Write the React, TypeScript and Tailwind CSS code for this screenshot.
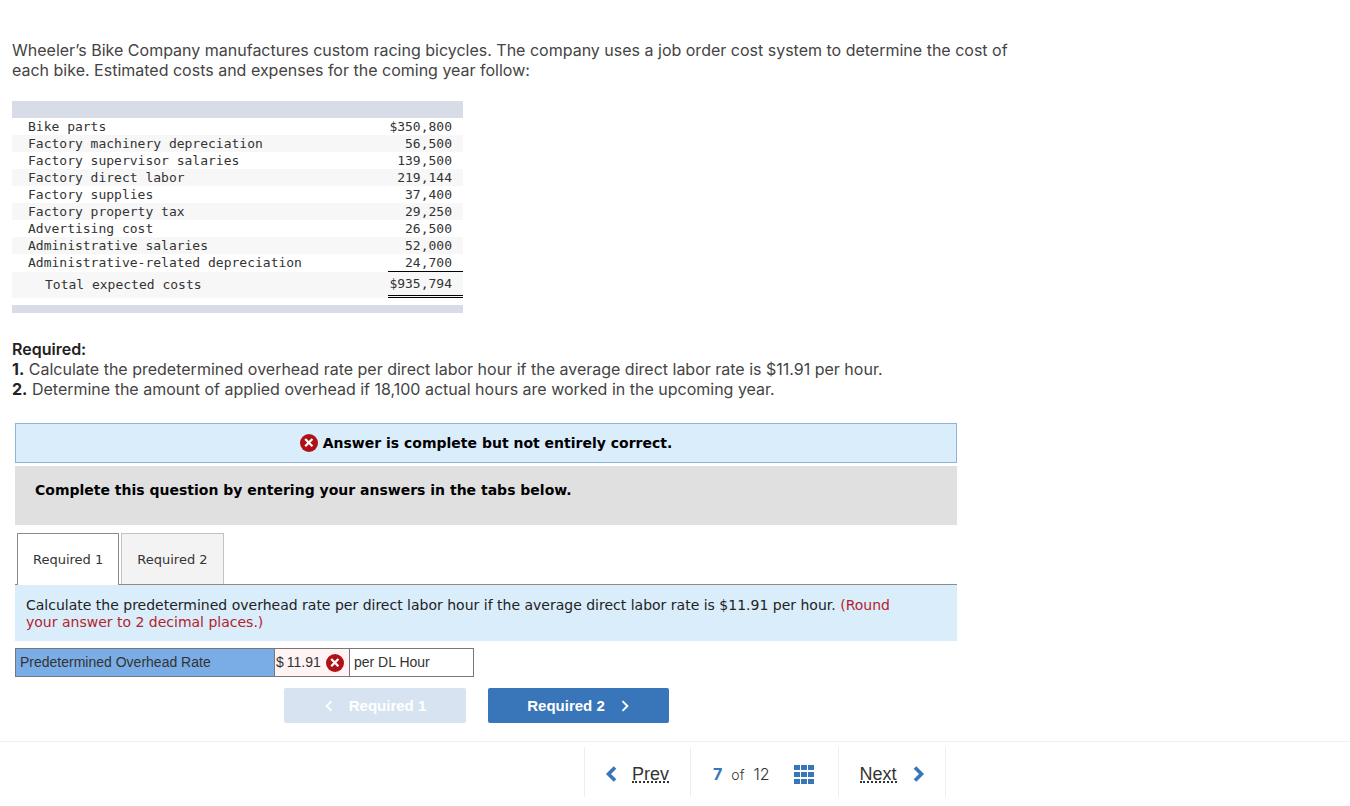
import { useState } from "react";

const costs: [string, string][] = [
  ["Bike parts", "$350,800"],
  ["Factory machinery depreciation", "56,500"],
  ["Factory supervisor salaries", "139,500"],
  ["Factory direct labor", "219,144"],
  ["Factory supplies", "37,400"],
  ["Factory property tax", "29,250"],
  ["Advertising cost", "26,500"],
  ["Administrative salaries", "52,000"],
  ["Administrative-related depreciation", "24,700"],
];

function WrongIcon() {
  return (
    <svg role="img" aria-label="Incorrect" viewBox="0 0 18 18" className="size-[18px] shrink-0">
      <circle cx="9" cy="9" r="9" fill="#b01116" />
      <path d="M5.2 5l7.2 7.2M12.4 5l-7.2 7.2" stroke="#fff" strokeWidth="2.3" />
    </svg>
  );
}

function Chevron({ flip = false, bold = false }: { flip?: boolean; bold?: boolean }) {
  return (
    <svg
      aria-hidden="true"
      viewBox="0 0 12 16"
      className={bold ? "h-4 w-3" : "h-3 w-[9px]"}
      fill="none"
      stroke="currentColor"
      strokeWidth={bold ? 3.6 : 2.6}
    >
      <path d={flip ? "M10 1.5L3.5 8l6.5 6.5" : "M2 1.5L8.5 8L2 14.5"} />
    </svg>
  );
}

function CostTable() {
  return (
    <div className="mt-[21px] w-[451px] border-b-8 border-[#d8dce7] pb-[7px]">
      <table className="w-full border-separate border-spacing-0 font-['DejaVu_Sans_Mono',monospace] text-[13px] leading-[17px] text-[#333]">
        <thead>
          <tr className="h-[17px] bg-[#d8dce7]">
            <td className="p-0" colSpan={2} />
          </tr>
        </thead>
        <tbody>
          {costs.map(([label, value], i) => (
            <tr key={label} className="align-top even:bg-[#f7f7f7]">
              <td className="p-0 pl-4">{label}</td>
              <td
                className={
                  i === costs.length - 1
                    ? "w-[75px] border-b border-black p-0 pr-[11px] text-right"
                    : "w-[75px] p-0 pr-[11px] text-right"
                }
              >
                {value}
              </td>
            </tr>
          ))}
          <tr className="bg-[#f7f7f7]">
            <td className="p-0 pb-0.5 pl-[33px]">Total expected costs</td>
            <td className="h-[26px] border-b-3 border-double border-black p-0 pr-[11px] text-right">$935,794</td>
          </tr>
        </tbody>
      </table>
    </div>
  );
}

export default function App() {
  const [tab, setTab] = useState(1);
  const tabClass = (n: number) =>
    n === tab
      ? "-mb-px border border-b-0 border-[#8c8c8c] bg-white px-[15px] pb-px"
      : "border border-b-0 border-[#c3c3c3] bg-[#f3f3f3] px-[15px]";

  return (
    <div className="bg-white font-['Liberation_Sans',sans-serif] text-[#333]">
      <main className="pt-10 pb-[18px] pl-3">
        <div className="max-w-[1020px] font-[Inter,sans-serif] text-[16px] leading-5 font-normal text-[#444]">
          <p>
            Wheeler’s Bike Company manufactures custom racing bicycles. The company uses a job order cost system to
            determine the cost of each bike. Estimated costs and expenses for the coming year follow:
          </p>
          <CostTable />
          <div className="mt-[26px]">
            <h2 className="font-semibold text-[#222]">Required:</h2>
            <p>
              <b className="font-bold text-[#222]">1.</b> Calculate the predetermined overhead rate per direct labor
              hour if the average direct labor rate is $11.91 per hour.
            </p>
            <p>
              <b className="font-bold text-[#222]">2.</b> Determine the amount of applied overhead if 18,100 actual
              hours are worked in the upcoming year.
            </p>
          </div>
        </div>

        <section className="mt-6 ml-[3px] max-w-[942px] font-['DejaVu_Sans',sans-serif] text-[14px] leading-[17px]">
          <div className="flex h-10 items-center justify-center gap-[5px] border border-[#8fb4dc] bg-[#daedfb] font-bold text-black">
            <WrongIcon />
            <span>Answer is complete but not entirely correct.</span>
          </div>
          <div className="mt-[3px] bg-[#e0e0e0] px-5 pt-4 pb-[26px] font-bold text-black">
            Complete this question by entering your answers in the tabs below.
          </div>
          <div role="tablist" className="mt-2 flex h-[52px] gap-0.5 border-b border-[#8c8c8c] pl-0.5 text-[13px]">
            {[1, 2].map((n) => (
              <button key={n} type="button" role="tab" aria-selected={tab === n} onClick={() => setTab(n)} className={tabClass(n)}>
                Required {n}
              </button>
            ))}
          </div>
          <p className="bg-[#daedfb] pt-3 pr-8 pb-[10px] pl-[11px] text-[#222]">
            Calculate the predetermined overhead rate per direct labor hour if the average direct labor rate is $11.91
            per hour. <span className="text-[#b5222b]">(Round your answer to 2 decimal places.)</span>
          </p>

          <table className="mt-[7px] border-collapse font-['Liberation_Sans',sans-serif] text-[14px] leading-4">
            <tbody>
              <tr className="h-7">
                <th scope="row" className="w-[259px] border border-[#777] bg-[#7aade6] p-0 pb-0.5 pl-1 text-left font-normal">
                  <label htmlFor="rate">Predetermined Overhead Rate</label>
                </th>
                <td className="w-[75px] border border-[#777] bg-[#fff3f3] p-0">
                  <div className="flex items-center pl-px">
                    <span className="pb-0.5">$</span>
                    <input id="rate" defaultValue="11.91" className="ml-[3px] w-[39px] bg-transparent p-0 pb-0.5 outline-none" />
                    <WrongIcon />
                  </div>
                </td>
                <td className="w-[124px] border border-[#777] p-0 pb-0.5 pl-1">per DL Hour</td>
              </tr>
            </tbody>
          </table>

          <div className="mt-[11px] ml-[269px] flex gap-[22px] font-['Liberation_Sans',sans-serif] text-[15px] font-bold text-white">
            <button
              type="button"
              disabled
              className="flex h-[35px] w-[182px] items-center justify-center gap-4 rounded-xs bg-[#d7e3f1]"
            >
              <Chevron flip />
              Required 1
            </button>
            <button
              type="button"
              onClick={() => setTab(2)}
              className="flex h-[35px] w-[181px] items-center justify-center gap-4 rounded-xs bg-[#3875b9]"
            >
              Required 2
              <Chevron />
            </button>
          </div>
        </section>
      </main>

      <nav className="flex border-t border-[#f0f0f0] pt-[5px] pl-[584px] text-[18px]">
        <a href="#prev" className="flex h-[50px] items-center gap-[15px] border-l border-[#eee] pt-1 pr-[21px] pl-5">
          <span className="text-[#3875b9]">
            <Chevron flip bold />
          </span>
          <span className="mt-0.5 border-b-2 border-dotted border-[#333] leading-[14px]">Prev</span>
        </a>
        <div className="flex h-[50px] items-center border-x border-[#eee] pt-1 pr-6 pl-[22px] font-[Inter,sans-serif] text-[16px] font-light">
          <b className="font-bold text-[#3875b9]">7</b>
          <span className="mx-[9px] text-[14px]">of</span>
          <span>12</span>
          <button type="button" aria-label="All questions" className="ml-6 text-[#3875b9]">
            <svg viewBox="0 0 20 19" className="h-[19px] w-5" fill="currentColor">
              {[0, 7, 14].map((x) => [0, 7, 14].map((y) => <rect key={`${x}-${y}`} x={x} y={y} width="6" height="5" />))}
            </svg>
          </button>
        </div>
        <a href="#next" className="flex h-[50px] items-center gap-4 border-r border-[#eee] pt-1 pr-5 pl-[21px]">
          <span className="mt-0.5 border-b-2 border-dotted border-[#333] leading-[14px]">Next</span>
          <span className="text-[#3875b9]">
            <Chevron bold />
          </span>
        </a>
      </nav>
    </div>
  );
}
